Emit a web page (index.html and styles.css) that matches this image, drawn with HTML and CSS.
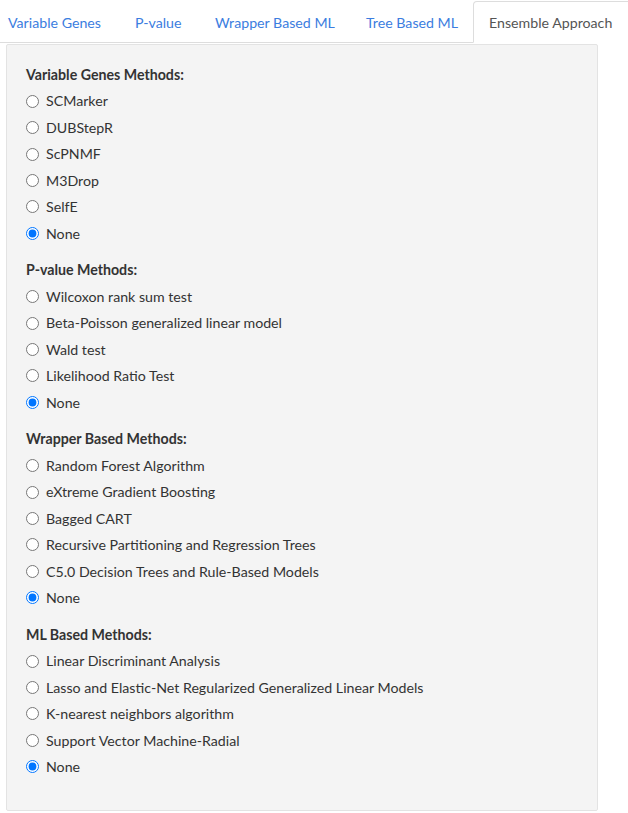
FILE: index.html
```html
<!DOCTYPE html>
<html>
<head>
<meta charset="utf-8">
<link rel="stylesheet" href="styles.css">
</head>
<body>
<ul class="tabs">
  <li class="tab t1"><a>Variable Genes</a></li>
  <li class="tab t2"><a>P-value</a></li>
  <li class="tab t3"><a>Wrapper Based ML</a></li>
  <li class="tab t4"><a>Tree Based ML</a></li>
  <li class="tab t5 active"><a>Ensemble Approach</a></li>
</ul>
<div class="well">
  <div class="group">
    <div class="group-label">Variable Genes Methods:</div>
    <div class="options">
      <label class="radio"><input type="radio" name="g1">SCMarker</label>
      <label class="radio"><input type="radio" name="g1">DUBStepR</label>
      <label class="radio"><input type="radio" name="g1">ScPNMF</label>
      <label class="radio"><input type="radio" name="g1">M3Drop</label>
      <label class="radio"><input type="radio" name="g1">SelfE</label>
      <label class="radio"><input type="radio" name="g1" checked>None</label>
    </div>
  </div>
  <div class="group">
    <div class="group-label">P-value Methods:</div>
    <div class="options">
      <label class="radio"><input type="radio" name="g2">Wilcoxon rank sum test</label>
      <label class="radio"><input type="radio" name="g2">Beta-Poisson generalized linear model</label>
      <label class="radio"><input type="radio" name="g2">Wald test</label>
      <label class="radio"><input type="radio" name="g2">Likelihood Ratio Test</label>
      <label class="radio"><input type="radio" name="g2" checked>None</label>
    </div>
  </div>
  <div class="group">
    <div class="group-label">Wrapper Based Methods:</div>
    <div class="options">
      <label class="radio"><input type="radio" name="g3">Random Forest Algorithm</label>
      <label class="radio"><input type="radio" name="g3">eXtreme Gradient Boosting</label>
      <label class="radio"><input type="radio" name="g3">Bagged CART</label>
      <label class="radio"><input type="radio" name="g3">Recursive Partitioning and Regression Trees</label>
      <label class="radio"><input type="radio" name="g3">C5.0 Decision Trees and Rule-Based Models</label>
      <label class="radio"><input type="radio" name="g3" checked>None</label>
    </div>
  </div>
  <div class="group">
    <div class="group-label">ML Based Methods:</div>
    <div class="options">
      <label class="radio"><input type="radio" name="g4">Linear Discriminant Analysis</label>
      <label class="radio"><input type="radio" name="g4">Lasso and Elastic-Net Regularized Generalized Linear Models</label>
      <label class="radio"><input type="radio" name="g4">K-nearest neighbors algorithm</label>
      <label class="radio"><input type="radio" name="g4">Support Vector Machine-Radial</label>
      <label class="radio"><input type="radio" name="g4" checked>None</label>
    </div>
  </div>
</div>
</body>
</html>
```
FILE: styles.css
```css
html, body {
  margin: 0;
  padding: 0;
  background: #fff;
}
body {
  font-family: Lato, "Noto Sans", sans-serif;
  font-size: 14.2px;
  line-height: 21.43px;
  color: #333;
  overflow: hidden;
}
.tabs {
  list-style: none;
  margin: 0;
  padding: 1px 0 0 0;
  display: flex;
  border-bottom: 1px solid #ddd;
  height: 43px;
  box-sizing: border-box;
  margin-left: -8px;
  width: 636px;
}
.tab {
  margin-right: 2px;
  margin-bottom: -1px;
  flex: none;
}
.tab a {
  display: block;
  padding: 10px 15px;
  color: #3b7de0;
  border: 1px solid transparent;
  border-radius: 4px 4px 0 0;
  white-space: nowrap;
  box-sizing: border-box;
  height: 42px;
}
.t1 a { width: 125px; }
.t2 a { width: 78px; }
.t3 a { width: 149px; }
.t4 a { width: 121px; }
.t5 a { width: 170px; }
.tab.active a {
  color: #555;
  background: #fff;
  border-color: #ddd #ddd transparent #ddd;
}
.well {
  margin: 1px 0 0 6px;
  width: 592px;
  box-sizing: border-box;
  height: 767px;
  padding: 19px;
  background: #f4f4f4;
  border: 1px solid #e3e3e3;
  border-radius: 2px;
}
.group {
  margin-bottom: 15.4px;
}
.group-label {
  font-weight: 700;
  margin-bottom: 5px;
}
.options {
  display: flex;
  flex-direction: column;
  gap: 5px;
}
.radio {
  display: flex;
  align-items: center;
  gap: 7px;
  font-weight: 400;
}
.radio input {
  margin: 0;
  width: 13px;
  height: 13px;
  flex: none;
}
```
